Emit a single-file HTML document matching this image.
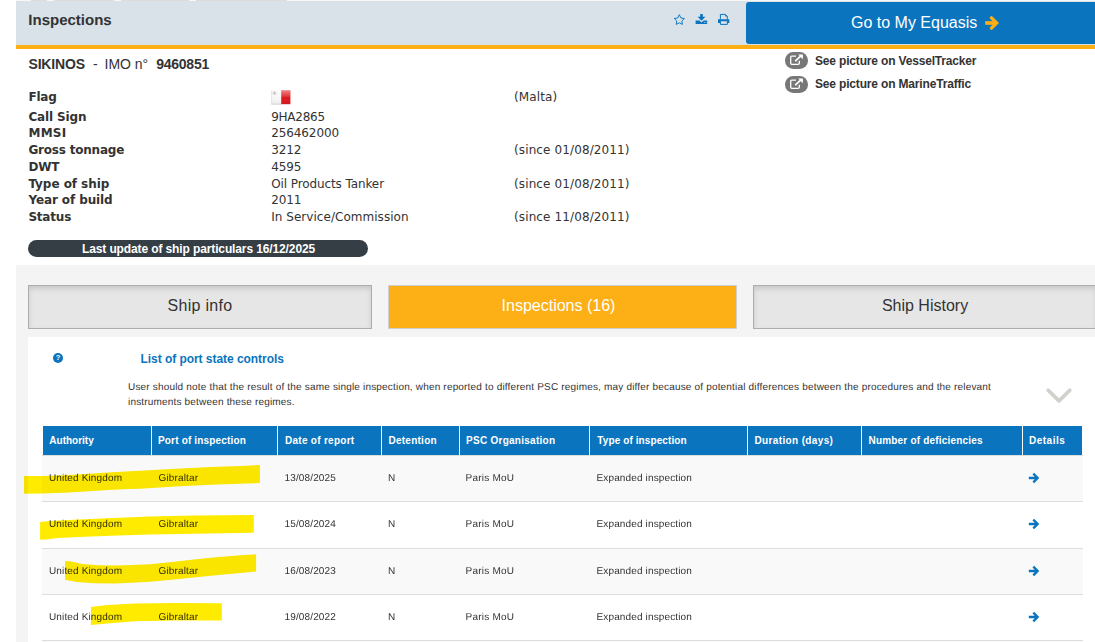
<!DOCTYPE html>
<html lang="en">
<head>
<meta charset="utf-8">
<title>Equasis - Inspections</title>
<style>
*{box-sizing:border-box;margin:0;padding:0}
html,body{width:1095px;height:642px;overflow:hidden;background:#fff}
body{position:relative;font-family:"Liberation Sans",Arial,sans-serif;color:#333}
.a{position:absolute}
.t{position:absolute;white-space:nowrap;line-height:1}
.b{font-weight:bold}
.v{font-family:"DejaVu Sans",Verdana,sans-serif;font-size:12px;color:#333}
.vb{letter-spacing:-0.2px}
#hdr{left:16px;top:1px;width:1079px;height:44px;background:#d9e1e9}
#topstrip{left:16px;top:0;width:1079px;height:1px;background:#f7f7f7}
.ts{position:absolute;top:0;height:1px;background:#dcdcdc}
#obar{left:16px;top:45px;width:1079px;height:4px;background:#fdaf15}
#btn{left:746px;top:2px;width:360px;height:42px;background:#0b74be;border-radius:3px}
#grey{left:16px;top:265px;width:1079px;height:377px;background:#f4f4f4}
#panel{left:28px;top:337px;width:1067px;height:305px;background:#fff}
.tab{position:absolute;top:285px;height:44px;border:1px solid #adadad;background:#e6e6e6;box-shadow:inset 0 3px 5px rgba(0,0,0,.125);font-size:16px;text-align:center;line-height:40px;color:#333}
.tab.on{background:#fdb015;border-color:#cfcfd2;box-shadow:none;color:#fff;padding-right:8px}
#pill{left:28px;top:240px;width:340px;height:17px;border-radius:9px;background:#353d45}
#tb{position:absolute;left:0;top:455px;width:1095px;height:187px;overflow:hidden;isolation:isolate;background:linear-gradient(to right,#fff 0,#fff 16px,#f4f4f4 16px,#f4f4f4 28px,#fff 28px)}
#th{left:43px;top:426px;width:1039px;height:29px;background:#0b74be}
.vd{position:absolute;top:426px;width:1px;height:29px;background:#fff}
.h{color:#fff;font-weight:bold;font-size:10px;top:436px}
.row{position:absolute;left:42px;width:1041px;border-top:1px solid #ddd}
.odd{background:#f9f9f9}
.c{font-size:10px;color:#333;letter-spacing:0.14px;text-rendering:geometricPrecision}
.n{font-size:10px;color:#333;letter-spacing:0.18px;text-rendering:geometricPrecision}
.bdg{position:absolute;left:785px;width:23px;height:16.6px;border-radius:8.3px;background:#777}
</style>
</head>
<body>
<div class="a" id="topstrip"></div>
<div class="a" id="hdr"></div>
<div class="ts" style="left:31px;width:16px"></div>
<div class="ts" style="left:54px;width:60px"></div>
<div class="ts" style="left:121px;width:68px"></div>
<div class="ts" style="left:196px;width:91px"></div>
<div class="a" id="obar"></div>
<div class="a" id="btn"></div>
<div class="t b" style="left:28.3px;top:13px;font-size:15px;text-rendering:geometricPrecision">Inspections</div>
<svg class="a" style="left:672px;top:12px" width="60" height="15" viewBox="672 12 60 15"><path d="M679.3 14.7 680.9 18 684.4 18.5 681.8 21 682.4 24.4 679.3 22.8 676.2 24.4 676.8 21 674.2 18.5 677.7 18Z" fill="none" stroke="#0b74be" stroke-width="0.95" stroke-linejoin="round"/><path d="M700.2 13.9H702.8V16.8H705.4L701.5 20.7 697.6 16.8H700.2Z" fill="#0b74be"/><path d="M695.6 20.5H699.3L701.5 22.4 703.7 20.5H707.2V23.9H695.6Z" fill="#0b74be"/><path d="M704 22.3H704.8V23H704ZM705.6 22.3H706.4V23H705.6Z" fill="#d9e1e9"/><path d="M720.4 19.3V14.4H725.4L727.3 16.3V19.3" fill="none" stroke="#0b74be" stroke-width="1"/><path d="M725.2 14.2 727.6 16.6H725.2Z" fill="#0b74be"/><path d="M718 19.2H729.3V23H727.3V21.3H720.4V23H718Z" fill="#0b74be"/><path d="M720.4 21.3V24.4H727.3V21.3" fill="none" stroke="#0b74be" stroke-width="1"/></svg>
<div class="t" style="left:851px;top:15px;font-size:16px;color:#fff">Go to My Equasis</div>
<svg class="a" style="left:985px;top:16px" width="15" height="14" viewBox="0 0 15 14"><path d="M0.2 7H11" fill="none" stroke="#fdaf15" stroke-width="3.6"/><path d="M6.5 1.9 11.6 7 6.5 12.1" fill="none" stroke="#fdaf15" stroke-width="3.4" stroke-linejoin="miter" stroke-linecap="round"/></svg>
<div class="a" id="grey"></div>
<div class="a" id="panel"></div>
<div class="a" id="pill"></div>
<div class="t b" style="left:28.5px;top:57px;font-size:14px;letter-spacing:-.18px">SIKINOS</div>
<div class="t" style="left:93px;top:57px;font-size:14px">-</div>
<div class="t" style="left:104.5px;top:57px;font-size:14px">IMO n°</div>
<div class="t b" style="left:156.3px;top:57px;font-size:14px;letter-spacing:-.27px">9460851</div>
<div class="t v b" style="left:28.4px;top:91px;letter-spacing:-0.2px">Flag</div>
<div class="t v b" style="left:28.4px;top:111px;letter-spacing:-0.12px">Call Sign</div>
<div class="t v b" style="left:28.4px;top:127px;letter-spacing:0.3px">MMSI</div>
<div class="t v b" style="left:28.4px;top:144px;letter-spacing:-0.2px">Gross tonnage</div>
<div class="t v b" style="left:28.4px;top:161px;letter-spacing:-0.2px">DWT</div>
<div class="t v b" style="left:28.4px;top:178px;letter-spacing:-0.05px">Type of ship</div>
<div class="t v b" style="left:28.4px;top:194px;letter-spacing:-0.1px">Year of build</div>
<div class="t v b" style="left:28.4px;top:211px;letter-spacing:-0.2px">Status</div>
<div class="t v" style="left:271.2px;top:111px;letter-spacing:-0.25px">9HA2865</div>
<div class="t v" style="left:271.2px;top:127px;letter-spacing:-0.1px">256462000</div>
<div class="t v" style="left:271.2px;top:144px;letter-spacing:-0.1px">3212</div>
<div class="t v" style="left:271.2px;top:161px;letter-spacing:-0.1px">4595</div>
<div class="t v" style="left:271.2px;top:178px;letter-spacing:-0.1px">Oil Products Tanker</div>
<div class="t v" style="left:271.2px;top:194px;letter-spacing:-0.1px">2011</div>
<div class="t v" style="left:271.2px;top:211px;letter-spacing:0.04px">In Service/Commission</div>
<div class="t v" style="left:514px;top:91px;letter-spacing:.12px">(Malta)</div>
<div class="t v" style="left:514px;top:144px;letter-spacing:.12px">(since 01/08/2011)</div>
<div class="t v" style="left:514px;top:178px;letter-spacing:.12px">(since 01/08/2011)</div>
<div class="t v" style="left:514px;top:211px;letter-spacing:.12px">(since 11/08/2011)</div>
<svg class="a" style="left:271px;top:90px" width="20" height="16" viewBox="0 0 20 16"><defs><linearGradient id="gl" x1="0" y1="0" x2="0" y2="1"><stop offset="0" stop-color="#fff" stop-opacity=".45"/><stop offset=".45" stop-color="#fff" stop-opacity=".12"/><stop offset=".5" stop-color="#fff" stop-opacity="0"/><stop offset="1" stop-color="#000" stop-opacity=".06"/></linearGradient></defs><rect x="0.3" y="0.4" width="9.9" height="14.1" fill="#f7f7f7"/><rect x="10.2" y="0.4" width="9.2" height="13.8" fill="#dc1a1f"/><rect x="0.3" y="0.4" width="19.1" height="13.8" fill="url(#gl)"/><rect x="0.6" y="13.7" width="9.6" height="1" fill="#c4c4c4" opacity=".6"/><rect x="0.3" y="0.4" width="0.8" height="14" fill="#ccc" opacity=".55"/><path d="M1.6 3.2H5.4M3.5 1.3V5.1" stroke="#d3c4c6" stroke-width="1.3"/><rect x="2.9" y="2.6" width="1.2" height="1.2" fill="#bdbdbd"/></svg>
<div class="t b" style="left:82px;top:243px;font-size:12px;color:#fff;letter-spacing:-0.12px">Last update of ship particulars 16/12/2025</div>
<div class="bdg" style="top:52px"></div>
<svg class="a" style="left:789px;top:54px" width="15" height="12" viewBox="789 54 15 12"><path d="M799.3 60.8V63.2Q799.3 64.3 798.2 64.3H791.8Q790.7 64.3 790.7 63.2V57.2Q790.7 56.1 791.8 56.1H796" fill="none" stroke="#fff" stroke-width="1.3"/><path d="M795.2 61.2 801.2 55.6" stroke="#fff" stroke-width="1.7" fill="none"/><path d="M798.2 54.6H802.9V59.3Z" fill="#fff"/></svg>
<div class="bdg" style="top:76.2px"></div>
<svg class="a" style="left:789px;top:78.2px" width="15" height="12" viewBox="789 54 15 12"><path d="M799.3 60.8V63.2Q799.3 64.3 798.2 64.3H791.8Q790.7 64.3 790.7 63.2V57.2Q790.7 56.1 791.8 56.1H796" fill="none" stroke="#fff" stroke-width="1.3"/><path d="M795.2 61.2 801.2 55.6" stroke="#fff" stroke-width="1.7" fill="none"/><path d="M798.2 54.6H802.9V59.3Z" fill="#fff"/></svg>
<div class="t b" style="left:815px;top:55px;font-size:12px;letter-spacing:-0.17px">See picture on VesselTracker</div>
<div class="t b" style="left:815px;top:78px;font-size:12px;letter-spacing:-0.17px">See picture on MarineTraffic</div>
<div class="tab" style="left:28px;width:344px;letter-spacing:.3px">Ship info</div>
<div class="tab on" style="left:388px;width:349px">Inspections (16)</div>
<div class="tab" style="left:753px;width:344px">Ship History</div>
<div class="a" style="left:53.2px;top:353px;width:10px;height:10px;border-radius:50%;background:#0b74be"></div>
<div class="t b" style="left:55.8px;top:353.6px;font-size:7.5px;color:#fff">?</div>
<div class="t b" style="left:140.5px;top:353px;font-size:12px;color:#0b74be;letter-spacing:-0.05px">List of port state controls</div>
<div class="t n" style="left:128px;top:383px">User should note that the result of the same single inspection, when reported to different PSC regimes, may differ because of potential differences between the procedures and the relevant</div>
<div class="t n" style="left:128px;top:398px">instruments between these regimes.</div>
<svg class="a" style="left:1040px;top:380px" width="40" height="30" viewBox="1040 380 40 30"><path d="M1048.2 390.3 1059 400.9 1069.8 390.3" fill="none" stroke="#d1d1cc" stroke-width="3.7" stroke-linecap="round" stroke-linejoin="round"/></svg>
<div class="a" id="th"></div>
<div class="vd" style="left:151px"></div>
<div class="vd" style="left:277px"></div>
<div class="vd" style="left:381px"></div>
<div class="vd" style="left:459px"></div>
<div class="vd" style="left:589px"></div>
<div class="vd" style="left:747px"></div>
<div class="vd" style="left:861px"></div>
<div class="vd" style="left:1022px"></div>
<div class="t h" style="left:49.3px;letter-spacing:0px">Authority</div>
<div class="t h" style="left:158px;letter-spacing:0.17px">Port of inspection</div>
<div class="t h" style="left:285px;letter-spacing:0.28px">Date of report</div>
<div class="t h" style="left:388.5px;letter-spacing:0.25px">Detention</div>
<div class="t h" style="left:466px;letter-spacing:0.27px">PSC Organisation</div>
<div class="t h" style="left:597.3px;letter-spacing:0.1px">Type of inspection</div>
<div class="t h" style="left:754.5px;letter-spacing:0.36px">Duration (days)</div>
<div class="t h" style="left:868.5px;letter-spacing:0.19px">Number of deficiencies</div>
<div class="t h" style="left:1029px;letter-spacing:0.5px">Details</div>
<div id="tb">
<div class="row odd" style="top:0px;height:46px"></div>
<div class="row" style="top:46px;height:47px"></div>
<div class="row odd" style="top:93px;height:46px"></div>
<div class="row" style="top:139px;height:46px"></div>
<div class="row odd" style="top:185px;height:2px"></div>
<div class="t c" style="left:49px;top:19px">United Kingdom</div>
<div class="t c" style="left:158.5px;top:19px">Gibraltar</div>
<div class="t c" style="left:284.5px;top:19px">13/08/2025</div>
<div class="t c" style="left:388px;top:19px">N</div>
<div class="t c" style="left:466px;top:19px;letter-spacing:.22px;margin-left:-.4px">Paris MoU</div>
<div class="t c" style="left:596.5px;top:19px">Expanded inspection</div>
<svg class="a" style="left:1028px;top:17px" width="12" height="12" viewBox="0 0 12 12"><path d="M0.8 6H9.2M5.3 1.7 9.6 6 5.3 10.3" fill="none" stroke="#0b74be" stroke-width="2.35" stroke-linejoin="miter"/></svg>
<div class="t c" style="left:49px;top:65px">United Kingdom</div>
<div class="t c" style="left:158.5px;top:65px">Gibraltar</div>
<div class="t c" style="left:284.5px;top:65px">15/08/2024</div>
<div class="t c" style="left:388px;top:65px">N</div>
<div class="t c" style="left:466px;top:65px;letter-spacing:.22px;margin-left:-.4px">Paris MoU</div>
<div class="t c" style="left:596.5px;top:65px">Expanded inspection</div>
<svg class="a" style="left:1028px;top:63px" width="12" height="12" viewBox="0 0 12 12"><path d="M0.8 6H9.2M5.3 1.7 9.6 6 5.3 10.3" fill="none" stroke="#0b74be" stroke-width="2.35" stroke-linejoin="miter"/></svg>
<div class="t c" style="left:49px;top:112px">United Kingdom</div>
<div class="t c" style="left:158.5px;top:112px">Gibraltar</div>
<div class="t c" style="left:284.5px;top:112px">16/08/2023</div>
<div class="t c" style="left:388px;top:112px">N</div>
<div class="t c" style="left:466px;top:112px;letter-spacing:.22px;margin-left:-.4px">Paris MoU</div>
<div class="t c" style="left:596.5px;top:112px">Expanded inspection</div>
<svg class="a" style="left:1028px;top:110px" width="12" height="12" viewBox="0 0 12 12"><path d="M0.8 6H9.2M5.3 1.7 9.6 6 5.3 10.3" fill="none" stroke="#0b74be" stroke-width="2.35" stroke-linejoin="miter"/></svg>
<div class="t c" style="left:49px;top:158px">United Kingdom</div>
<div class="t c" style="left:158.5px;top:158px">Gibraltar</div>
<div class="t c" style="left:284.5px;top:158px">19/08/2022</div>
<div class="t c" style="left:388px;top:158px">N</div>
<div class="t c" style="left:466px;top:158px;letter-spacing:.22px;margin-left:-.4px">Paris MoU</div>
<div class="t c" style="left:596.5px;top:158px">Expanded inspection</div>
<svg class="a" style="left:1028px;top:156px" width="12" height="12" viewBox="0 0 12 12"><path d="M0.8 6H9.2M5.3 1.7 9.6 6 5.3 10.3" fill="none" stroke="#0b74be" stroke-width="2.35" stroke-linejoin="miter"/></svg>
<svg class="a" style="left:0;top:0;mix-blend-mode:multiply" width="300" height="187" viewBox="0 455 300 187">
<g fill="#ffeb00">
<path d="M24 476.1 42 476.1 63.8 475.3 85.75 474 107.7 472.6 129.6 471.3 140 470.7 175.6 468.65 211.2 466.9 246.8 465.7 259.9 465.1 259.9 483.1 246.8 483.5 211.2 484.7 175.6 486.5 140 488.7 129.6 489 107.7 490.1 85.75 491.6 63.8 492.7 41.9 493.4 24 493.75Z"/>
<path d="M40.1 522 49.7 520.9 73.8 519.8 106.7 518.15 150 516.5 193.8 515.6 253.8 514.9 253.8 532.7 193.8 533.7 150 534.5 117.7 535.5 84.8 536.8 57.4 537.9 46.4 539.5 40.1 539.85Z"/>
<path d="M65.1 560.9 71.4 561.4 82.4 563.9 98.8 565.3 115.3 565.5 131.7 565 150 564.3 171.9 562 193.8 559.5 215.75 557.3 237.7 555.45 256.1 554.35 256.1 571.6 237.7 573.2 215.75 575.2 193.8 577.4 171.9 579.8 150 581.75 131.7 582.85 115.3 583.6 93.4 583.3 76.9 582 65.1 579.8Z"/>
<path d="M90.96 607.05 107.4 604.9 134.8 603.5 175.9 602.9 221.8 603.2 221.8 620.6 175.9 620.6 134.8 621.3 107.4 623.5 90.96 624.9Z"/>
</g></svg>
</div>
</body>
</html>
